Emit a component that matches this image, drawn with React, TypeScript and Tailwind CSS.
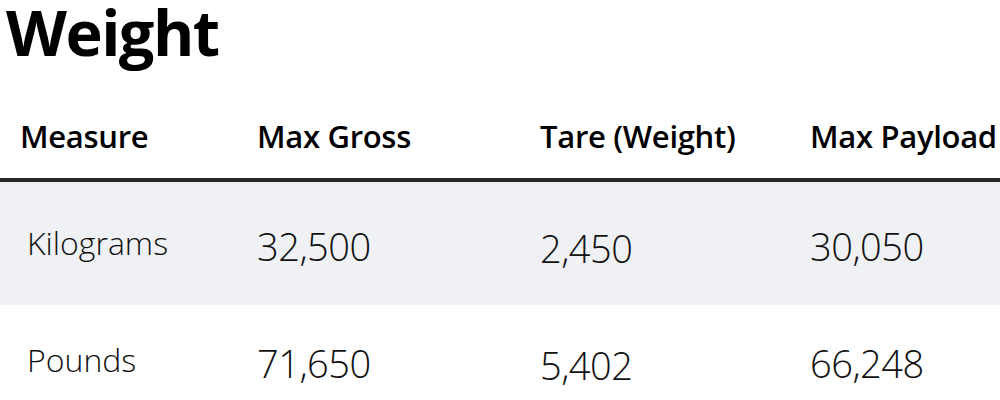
const font = "font-['Open_Sans','Noto_Sans',sans-serif]";

const rows = [
  { label: "Kilograms", gross: "32,500", tare: "2,450", payload: "30,050", shaded: true },
  { label: "Pounds", gross: "71,650", tare: "5,402", payload: "66,248", shaded: false },
];

export default function App() {
  return (
    <div className={`w-[1000px] h-[400px] overflow-hidden bg-white text-black ${font}`}>
      {/* Title */}
      <h1 className="h-[59px] pl-[6px] pt-[2px] text-[63px] leading-[59px] font-bold tracking-[-1.5px]">Weight</h1>

      {/* Table */}
      <div className="w-[1100px]">
        <div className="grid grid-cols-[257px_283px_270px_290px] h-[123px] pt-[61px] border-b-4 border-[#272727] text-[31px] leading-[32px] font-semibold tracking-[-0.3px]">
          <div className="pl-[20px]">Measure</div>
          <div>Max Gross</div>
          <div>Tare (Weight)</div>
          <div>Max Payload</div>
        </div>

        {rows.map((r) => (
          <div
            key={r.label}
            className={`grid grid-cols-[257px_283px_270px_290px] h-[123px] font-light text-[#111] ${r.shaded ? "bg-[#f0f1f5] pt-[45px]" : "bg-white pt-[39px]"}`}
          >
            <div className="pl-[27px] text-[32px] leading-[32px]">{r.label}</div>
            <div className="text-[38px] leading-[38px] tracking-[-0.5px]">{r.gross}</div>
            <div className="pt-[2px] text-[38px] leading-[38px] tracking-[-0.5px]">{r.tare}</div>
            <div className="text-[38px] leading-[38px] tracking-[-0.5px]">{r.payload}</div>
          </div>
        ))}
      </div>
    </div>
  );
}
